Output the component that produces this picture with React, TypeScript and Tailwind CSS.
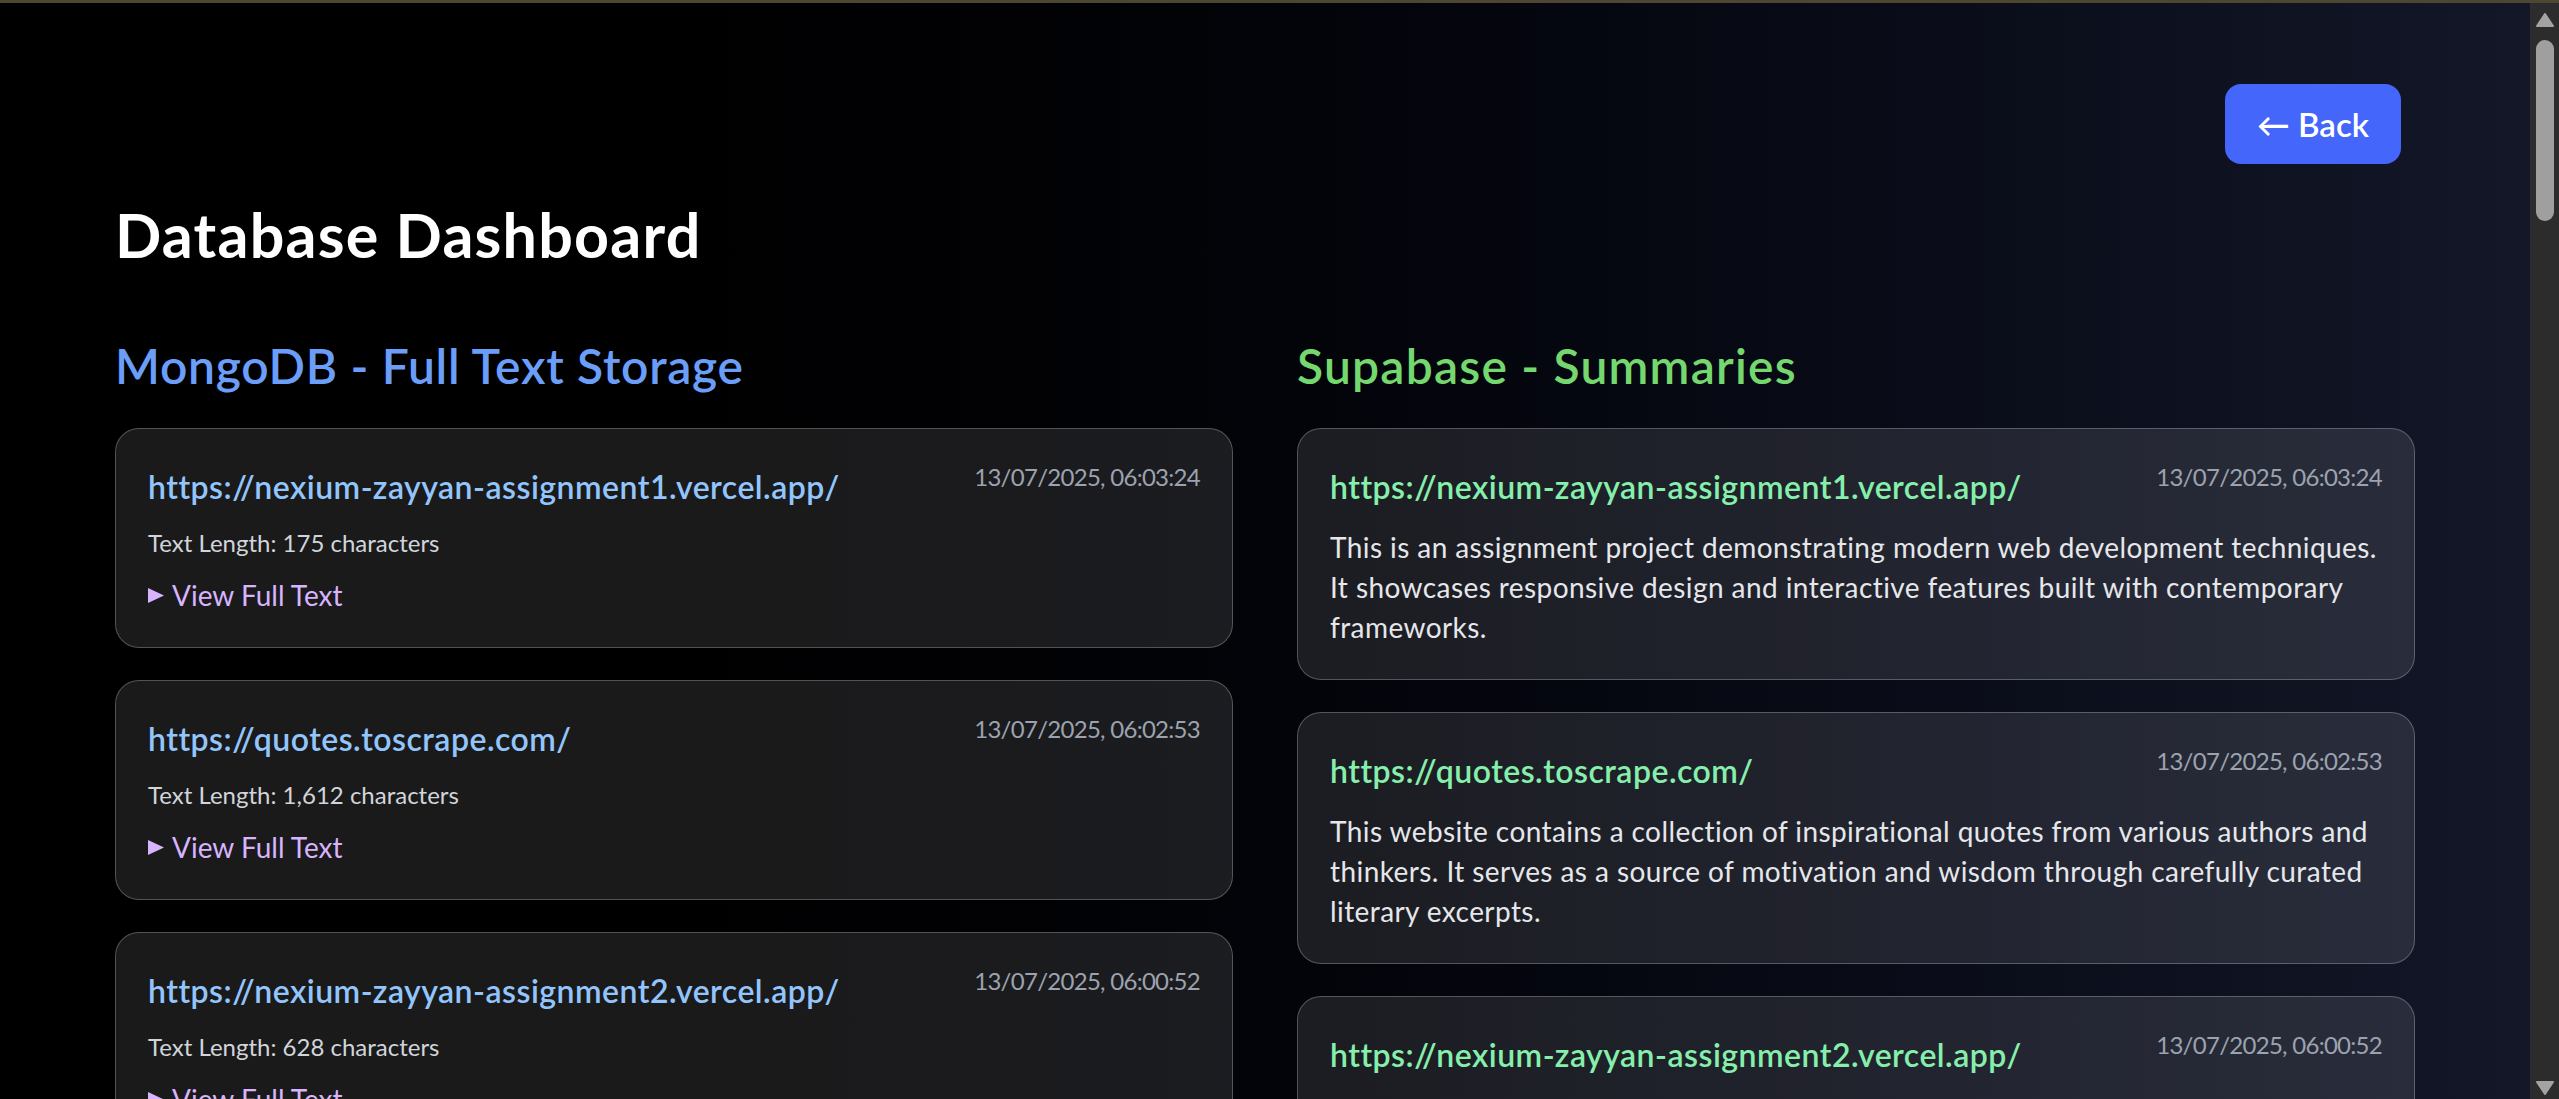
import React from 'react';

type MongoEntry = { url: string; date: string; length: string };
type SupaEntry = { url: string; date: string; summary: string };

const mongoEntries: MongoEntry[] = [
  { url: 'https://nexium-zayyan-assignment1.vercel.app/', date: '13/07/2025, 06:03:24', length: '175' },
  { url: 'https://quotes.toscrape.com/', date: '13/07/2025, 06:02:53', length: '1,612' },
  { url: 'https://nexium-zayyan-assignment2.vercel.app/', date: '13/07/2025, 06:00:52', length: '628' },
];

const supaEntries: SupaEntry[] = [
  {
    url: 'https://nexium-zayyan-assignment1.vercel.app/',
    date: '13/07/2025, 06:03:24',
    summary:
      'This is an assignment project demonstrating modern web development techniques. It showcases responsive design and interactive features built with contemporary frameworks.',
  },
  {
    url: 'https://quotes.toscrape.com/',
    date: '13/07/2025, 06:02:53',
    summary:
      'This website contains a collection of inspirational quotes from various authors and thinkers. It serves as a source of motivation and wisdom through carefully curated literary excerpts.',
  },
  {
    url: 'https://nexium-zayyan-assignment2.vercel.app/',
    date: '13/07/2025, 06:00:52',
    summary:
      'This project is a blog summariser that scrapes an article, generates a short summary and stores the results in two databases for later review.',
  },
];

const MongoCard = ({ entry }: { entry: MongoEntry }) => (
  <div className="rounded-3xl border border-white/25 bg-white/10 p-8">
    <div className="flex items-start justify-between gap-6">
      <a href={entry.url} className="pt-[2px] text-[32px] leading-[48px] font-semibold tracking-[0.015em] text-[#93c5fd]">
        {entry.url}
      </a>
      <span className="shrink-0 text-[24px] leading-[32px] tracking-[-0.03em] text-[#9ca3af]">{entry.date}</span>
    </div>
    <p className="mt-4 text-[24px] leading-[32px] text-[#d1d5db]">Text Length: {entry.length} characters</p>
    <details className="mt-4">
      <summary className="flex cursor-pointer list-none items-center text-[28px] leading-[40px] text-[#d8b4fe] [&::-webkit-details-marker]:hidden">
        <svg width="16" height="15" viewBox="0 0 16 15" className="shrink-0">
          <path d="M0 0 L16 7.5 L0 15 Z" fill="#d8b4fe" />
        </svg>
        <span className="ml-2">View Full Text</span>
      </summary>
    </details>
  </div>
);

const SupaCard = ({ entry }: { entry: SupaEntry }) => (
  <div className="rounded-3xl border border-white/25 bg-white/10 p-8">
    <div className="flex items-start justify-between gap-6">
      <a href={entry.url} className="pt-[2px] text-[32px] leading-[48px] font-semibold tracking-[0.015em] text-[#86efac]">
        {entry.url}
      </a>
      <span className="shrink-0 text-[24px] leading-[32px] tracking-[-0.03em] text-[#9ca3af]">{entry.date}</span>
    </div>
    <p className="mt-4 text-[28px] leading-[40px] tracking-[0.015em] text-[#e5e7eb]">{entry.summary}</p>
  </div>
);

const Scrollbar = () => (
  <div className="flex w-[29px] shrink-0 flex-col items-center bg-[#2c2c2c] pt-[10px] pb-[4px]">
    <svg width="18" height="14" viewBox="0 0 18 14">
      <path d="M9 1 L17 13 L1 13 Z" fill="#a3a3a3" stroke="#a3a3a3" strokeLinejoin="round" strokeWidth="2" />
    </svg>
    <div className="mt-[13px] h-[181px] w-[18px] rounded-full bg-[#9f9f9f]" />
    <div className="flex-1" />
    <svg width="18" height="14" viewBox="0 0 18 14">
      <path d="M1 1 L17 1 L9 13 Z" fill="#a3a3a3" stroke="#a3a3a3" strokeLinejoin="round" strokeWidth="2" />
    </svg>
  </div>
);

const App = () => {
  return (
    <div className="flex h-[1099px] w-full flex-col overflow-hidden bg-black font-['Lato','Open_Sans',sans-serif]">
      <div className="h-[3px] w-full shrink-0 bg-[#4d4630]" />
      <div className="flex min-h-0 flex-1">
        <main className="min-w-0 flex-1 bg-gradient-to-r from-black to-[#131728] px-[115px] pt-[81px]">
          <div className="flex justify-end pr-[14px]">
            <button className="rounded-2xl bg-[#4466fa] px-8 py-4 text-[33px] leading-[48px] font-semibold text-white">
              ← Back
            </button>
          </div>

          <h1 className="mt-8 mb-[61px] pt-[3px] text-[61px] leading-[72px] font-bold tracking-[0.02em] text-white">
            Database Dashboard
          </h1>

          <div className="grid grid-cols-2 gap-16">
            <section>
              <h2 className="mb-8 pt-[3px] text-[48px] leading-[61px] font-semibold tracking-[0.015em] text-[#6a9ef8]">
                MongoDB - Full Text Storage
              </h2>
              <div className="space-y-8">
                {mongoEntries.map((e) => (
                  <MongoCard key={e.url} entry={e} />
                ))}
              </div>
            </section>

            <section>
              <h2 className="mb-8 pt-[3px] text-[48px] leading-[61px] font-semibold tracking-[0.025em] text-[#74d86f]">
                Supabase - Summaries
              </h2>
              <div className="space-y-8">
                {supaEntries.map((e) => (
                  <SupaCard key={e.url} entry={e} />
                ))}
              </div>
            </section>
          </div>
        </main>
        <Scrollbar />
      </div>
    </div>
  );
};

export default App;
